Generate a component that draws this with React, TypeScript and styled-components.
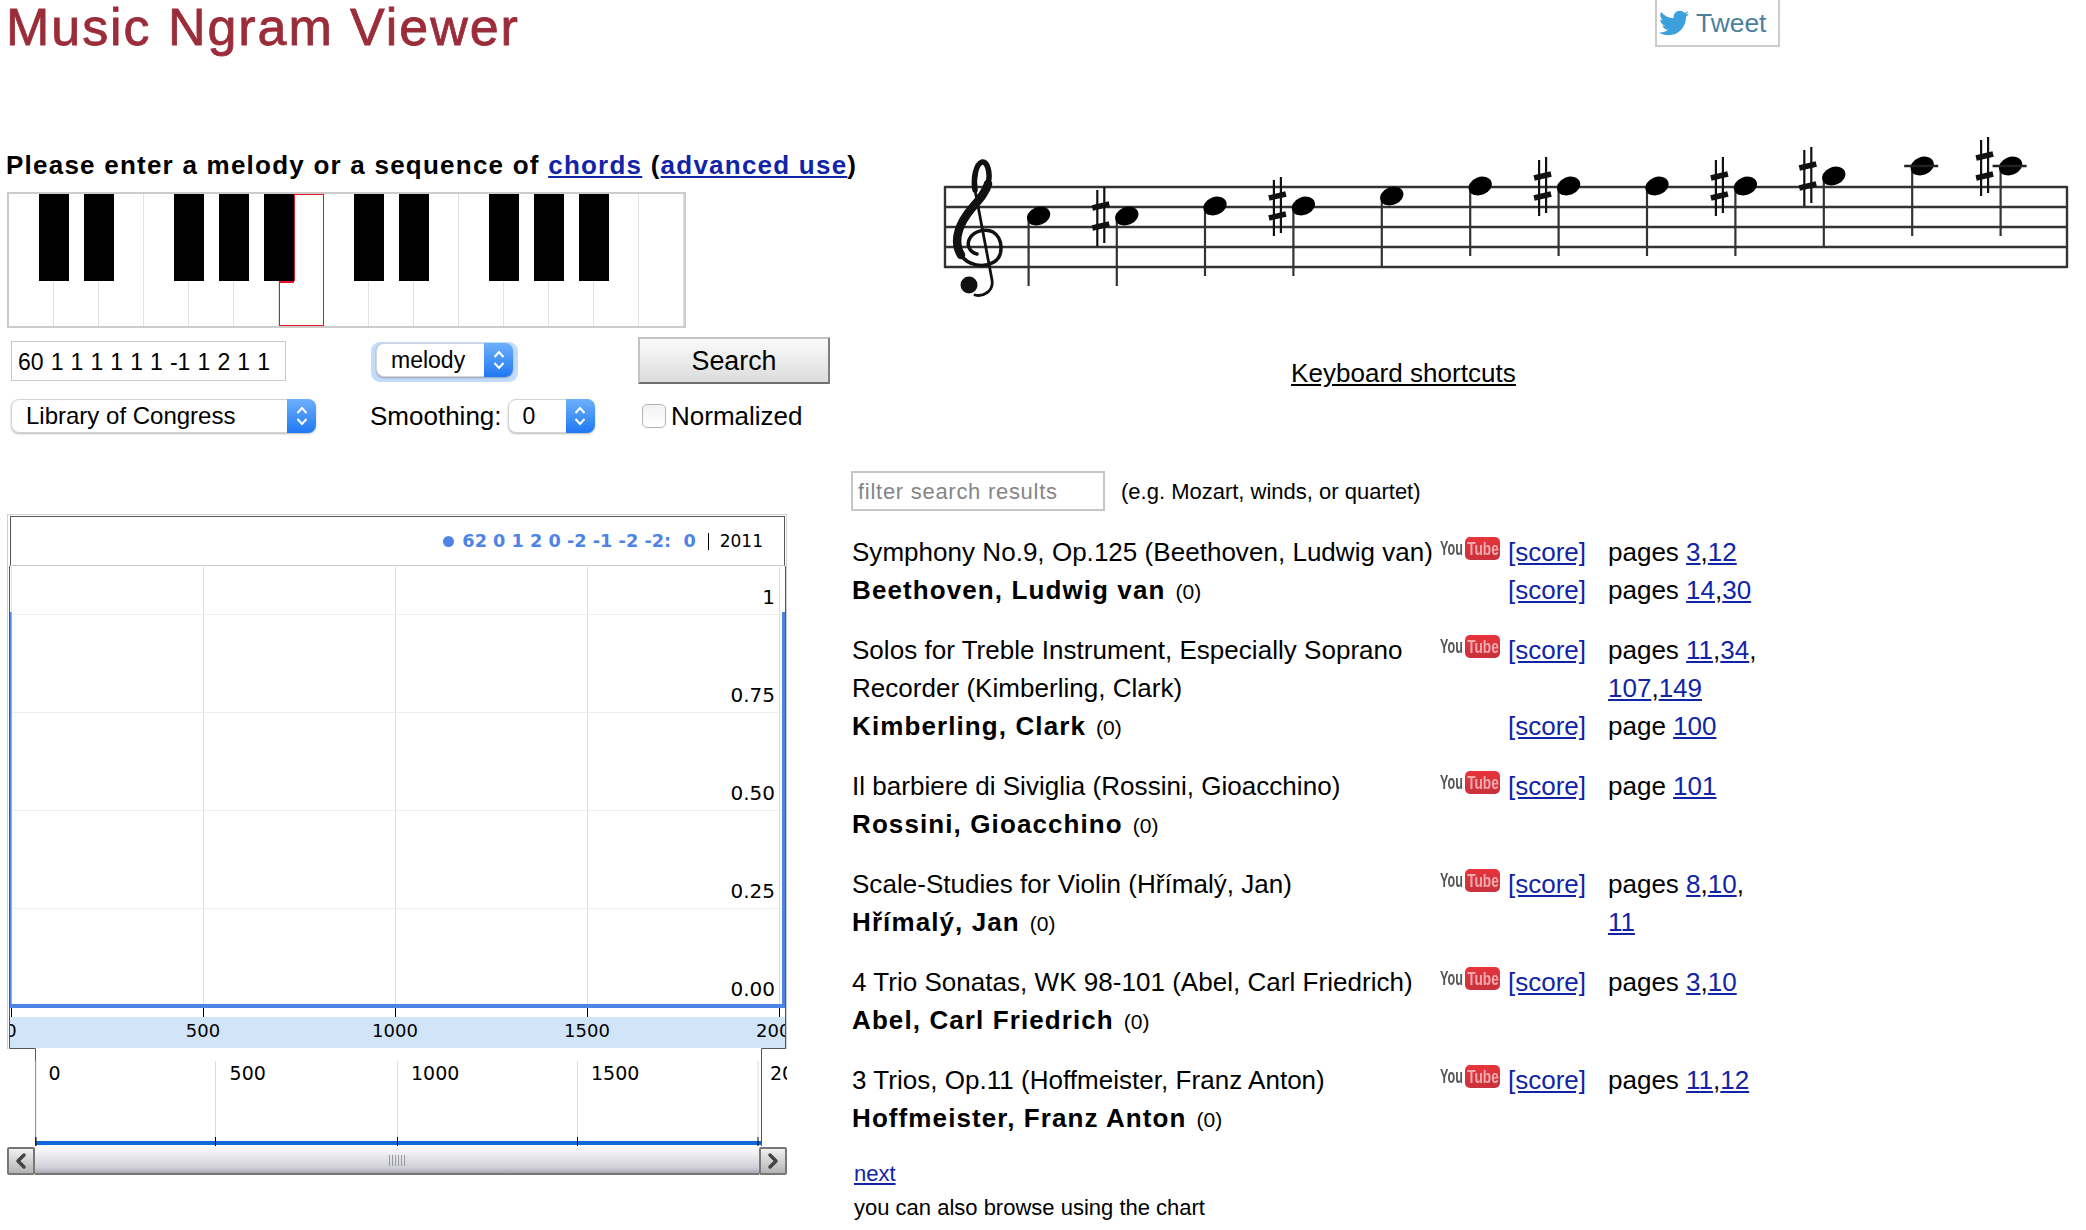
import * as React from 'react';
import styled, { createGlobalStyle } from 'styled-components';
import { FaTwitter } from 'react-icons/fa';
import { ChevronLeft, ChevronRight } from 'lucide-react';

const GlobalStyle = createGlobalStyle`
	html, body {
		margin: 0;
		padding: 0;
		background: #fff;
		color: #000;
		font-family: 'Liberation Sans', Arial, sans-serif;
	}
	* {
		box-sizing: border-box;
	}
`;

const LINK = '#1124a8';

const Header = styled.header`
	display: flex;
	justify-content: space-between;
	align-items: flex-start;
	width: 1780px;
	height: 130px;
	padding-left: 6px;
`;

const Title = styled.h1`
	margin: 1px 0 0;
	font-size: 52px;
	line-height: 52px;
	font-weight: normal;
	letter-spacing: 1.95px;
	color: #9b2d3b;
	-webkit-text-stroke: 0.8px #9b2d3b;
`;

const TweetButton = styled.a`
	display: flex;
	align-items: center;
	gap: 7px;
	width: 125px;
	height: 47px;
	padding: 1px 0 0 2px;
	border: 2px solid #ccc;
	border-top: none;
	font-size: 26.4px;
	color: #4b7f9e;
`;

const Main = styled.main`
	display: grid;
	grid-template-columns: 845px 1fr;
	grid-template-rows: 341px auto;
	padding-left: 6px;
`;

const Prompt = styled.p`
	margin: 0;
	height: 62px;
	padding-top: 18px;
	font-size: 26px;
	line-height: 34px;
	font-weight: bold;
	letter-spacing: 1.23px;
	white-space: nowrap;

	a {
		color: ${LINK};
		text-decoration: underline;
	}
`;

const Keyboard = styled.div`
	position: relative;
	display: flex;
	width: 679.5px;
	height: 136px;
	margin-left: 0.5px;
	border: 2px solid #ccc;
`;

const WhiteKey = styled.div<{ $active?: boolean }>`
	position: relative;
	flex: 0 0 45px;
	border-right: 1px solid #e2e2e2;
	&:last-child {
		border-right: none;
	}
	${(p) =>
		p.$active &&
		`
		border: 1.5px solid #e2161c;
		&::before {
			content: '';
			position: absolute;
			left: 0;
			top: 86px;
			width: 14px;
			height: 1.5px;
			background: #e2161c;
		}
	`}
`;

const BlackKey = styled.div<{ $slot: number; $active?: boolean }>`
	position: absolute;
	top: 0;
	left: ${(p) => p.$slot * 45 - 15}px;
	width: 30px;
	height: 87px;
	background: #000;
	${(p) => p.$active && 'box-shadow: 1px 0 0 #e2161c;'}
`;

const Controls = styled.div`
	display: grid;
	grid-template-columns: 360px 267px 200px;
	grid-template-rows: 47px 34px;
	row-gap: 16px;
	margin-top: 8px;
	padding-left: 5px;
	font-size: 26px;
`;

const MelodyInput = styled.div`
	align-self: end;
	width: 275px;
	height: 40px;
	margin-bottom: 2px;
	padding-left: 6px;
	border: 1px solid #c8c8c8;
	font-size: 23px;
	line-height: 40px;
	word-spacing: 0.7px;
	white-space: nowrap;
`;

const FocusRing = styled.div`
	align-self: end;
	width: 147px;
	height: 40px;
	margin-bottom: 1px;
	padding: 1px 5px 5px;
	background: #c4dcfb;
	border-radius: 9px;
`;

const Select = styled.div<{ $width: number; $pad: number; $size?: number }>`
	position: relative;
	display: flex;
	align-items: center;
	flex: none;
	width: ${(p) => p.$width}px;
	height: 34px;
	padding-left: ${(p) => p.$pad}px;
	background: #fff;
	border: 1px solid #d4d4d4;
	border-radius: 8px;
	box-shadow: 0 1px 2px rgba(0, 0, 0, 0.28);
	font-size: ${(p) => p.$size ?? 23}px;
	line-height: 34px;
	white-space: nowrap;
`;

const SelectCap = styled.span`
	position: absolute;
	top: -1px;
	right: -1px;
	bottom: -1px;
	display: flex;
	align-items: center;
	justify-content: center;
	width: 29px;
	background: linear-gradient(#6db0fb, #1f78f2);
	border-radius: 0 8px 8px 0;
`;

const SearchButton = styled.button`
	width: 192px;
	height: 47px;
	margin-top: 1px;
	padding: 2px 0 0;
	background: linear-gradient(#fbfbfb, #dcdcdc);
	border: 2px solid #c4c4c4;
	border-right-color: #808080;
	border-bottom-color: #707070;
	font-family: inherit;
	font-size: 26.8px;
	color: #000;
`;

const SmoothingField = styled.div`
	display: flex;
	align-items: center;
	gap: 6px;
	margin-left: -1px;
	font-size: 26px;
`;

const NormalizedField = styled.label`
	display: flex;
	align-items: center;
	gap: 5px;
	margin-left: 4px;
	font-size: 26px;
`;

const CheckBox = styled.span`
	width: 24px;
	height: 24px;
	background: linear-gradient(#f2f2f2, #fff);
	border: 1px solid #b4b4b4;
	border-radius: 5px;
`;

const ScorePanel = styled.section`
	padding-left: 89px;
`;

const Staff = styled.svg`
	display: block;
`;

const ShortcutsLink = styled.a`
	display: block;
	margin: 58px 0 0 351px;
	font-size: 26px;
	line-height: 30px;
	letter-spacing: 0.05px;
	color: #000;
	text-decoration: underline;
`;

const ChartPanel = styled.section`
	width: 780px;
	margin: 43px 0 0 1px;
`;

const LegendFrame = styled.div`
	padding: 1px 1px 0 1.5px;
	border: 1px solid #d0d0d0;
	border-width: 1px 1px 0;
`;

const Legend = styled.div`
	display: flex;
	align-items: center;
	justify-content: flex-end;
	height: 50px;
	padding: 0 21px 0 0;
	border: 1px solid #555;
	border-bottom-color: #c8c8c8;
	font-family: 'DejaVu Sans', sans-serif;
	white-space: pre;
`;

const LegendDot = styled.span`
	width: 11px;
	height: 11px;
	margin-right: 8px;
	background: #4d84e6;
	border-radius: 50%;
`;

const LegendSeries = styled.span`
	font-size: 17.7px;
	font-weight: bold;
	color: #4d84e6;
`;

const LegendDate = styled.span`
	margin-left: 12px;
	padding-left: 11px;
	border-left: 1px solid #000;
	font-size: 17px;
	line-height: 17px;
`;

const ChartCanvas = styled.svg`
	display: block;
`;

const AxisText = styled.text<{ $size: number }>`
	font-family: 'DejaVu Sans', sans-serif;
	font-size: ${(p) => p.$size}px;
	fill: #000;
`;

const Scrollbar = styled.div`
	display: flex;
	width: 780px;
	height: 28px;
`;

const ScrollButton = styled.div<{ $width: number }>`
	display: flex;
	align-items: center;
	justify-content: center;
	flex: 0 0 ${(p) => p.$width}px;
	background: linear-gradient(#f0f0f0, #b4b4b4);
	border: 2px solid #777;
	border-radius: 2px;
	color: #444;
`;

const ScrollTrack = styled.div`
	position: relative;
	flex: 1;
	background: linear-gradient(#fdfdfd 0%, #e6e6ea 40%, #cfcfd8 80%, #a9a9b4 100%);
	border-bottom: 2px solid #777;
`;

const ScrollGrip = styled.span`
	position: absolute;
	left: 50%;
	top: 8px;
	width: 16px;
	height: 11px;
	margin-left: -8px;
	background: repeating-linear-gradient(90deg, #9a9aa4 0 1px, transparent 1px 3px);
`;

const ResultsPanel = styled.section``;

const FilterRow = styled.div`
	display: flex;
	align-items: flex-start;
	gap: 16px;
	height: 40px;
	font-size: 22px;
	line-height: 40px;
`;

const FilterHint = styled.span`
	padding-top: 1px;
`;

const FilterInput = styled.div`
	width: 254px;
	height: 40px;
	padding-left: 5px;
	border: 2px solid #c6c6c6;
	line-height: 38px;
	letter-spacing: 0.72px;
	color: #858585;
	white-space: nowrap;
`;

const ResultsList = styled.div`
	display: flex;
	flex-direction: column;
	gap: 22px;
	margin-top: 22px;
	padding-left: 1px;
`;

const ResultGroup = styled.div`
	display: grid;
	grid-template-columns: 588px 68px 100px 155px;
	font-size: 26px;
	line-height: 38px;

	a {
		color: ${LINK};
		text-decoration: underline;
	}
`;

const WorkTitle = styled.div`
	grid-column: 1;
	letter-spacing: 0.03px;
`;

const Composer = styled.div`
	grid-column: 1;
	font-weight: bold;
	letter-spacing: 1.1px;
`;

const ComposerCount = styled.span`
	margin-left: 10px;
	font-size: 21px;
	line-height: 1;
	font-weight: normal;
	letter-spacing: 0;
`;

const ScoreCell = styled.div`
	grid-column: 3;
`;

const PagesCell = styled.div<{ $span?: boolean }>`
	grid-column: 4;
	${(p) => p.$span && 'grid-row: span 2;'}
`;

const YouTubeBadge = styled.span`
	grid-column: 2;
	display: flex;
	align-items: center;
	align-self: start;
	width: 60px;
	height: 23px;
	margin-top: 4px;
	line-height: 1;
	font-weight: bold;
	filter: blur(0.5px);
`;

const YouText = styled.span`
	display: block;
	width: 25px;
	margin-top: -3px;
	font-size: 21px;
	color: #555;
	transform: scaleX(0.6);
	transform-origin: 0 50%;
`;

const TubeBox = styled.span`
	display: flex;
	align-items: center;
	justify-content: center;
	width: 35px;
	height: 23px;
	background: linear-gradient(#e8343c, #c8323c);
	border-radius: 5px;
	overflow: hidden;
	font-size: 19px;
`;

const TubeText = styled.span`
	color: #eeaaae;
	transform: scaleX(0.72);
`;

const PagerBlock = styled.div`
	margin: 20px 0 0 3px;
	font-size: 22px;
	line-height: 34px;

	a {
		display: block;
		width: fit-content;
		color: ${LINK};
		text-decoration: underline;
		font-size: 22px;
	}
`;

const BLACK_SLOTS = [1, 2, 4, 5, 6, 8, 9, 11, 12, 13];

const NOTES = [
	{ stem: 1028.6, y: 216 },
	{ stem: 1116.8, y: 216, sharp: true },
	{ stem: 1205, y: 206 },
	{ stem: 1293.4, y: 206, sharp: true },
	{ stem: 1381.8, y: 196 },
	{ stem: 1470.2, y: 186 },
	{ stem: 1558.6, y: 186, sharp: true },
	{ stem: 1647, y: 186 },
	{ stem: 1735.4, y: 186, sharp: true },
	{ stem: 1823.8, y: 176, sharp: true },
	{ stem: 1912.2, y: 166, ledger: true },
	{ stem: 2000.6, y: 166, sharp: true, ledger: true },
];

const RESULTS = [
	{
		title: 'Symphony No.9, Op.125 (Beethoven, Ludwig van)',
		composer: 'Beethoven, Ludwig van',
		pages: [3, 12],
		composerPages: [14, 30],
	},
	{
		title: 'Solos for Treble Instrument, Especially Soprano Recorder (Kimberling, Clark)',
		composer: 'Kimberling, Clark',
		pages: [11, 34, 107, 149],
		composerPages: [100],
	},
	{
		title: 'Il barbiere di Siviglia (Rossini, Gioacchino)',
		composer: 'Rossini, Gioacchino',
		pages: [101],
	},
	{
		title: 'Scale-Studies for Violin (Hřímalý, Jan)',
		composer: 'Hřímalý, Jan',
		pages: [8, 10, 11],
	},
	{
		title: '4 Trio Sonatas, WK 98-101 (Abel, Carl Friedrich)',
		composer: 'Abel, Carl Friedrich',
		pages: [3, 10],
	},
	{
		title: '3 Trios, Op.11 (Hoffmeister, Franz Anton)',
		composer: 'Hoffmeister, Franz Anton',
		pages: [11, 12],
	},
];

const PLOT_X = [11, 203, 395, 587, 779];
const NAV_X = [36, 215.5, 397.5, 577.5, 758];
const NAV_LABELS = [48.5, 229.6, 411, 591, 770];
const YEARS = ['0', '500', '1000', '1500', '2000'];

const SelectArrows: React.FC = () => (
	<svg width='14' height='22' viewBox='0 0 14 22' fill='none' stroke='#fff' strokeWidth='2'>
		<path d='M2.5 8 L7 3 L11.5 8' />
		<path d='M2.5 14 L7 19 L11.5 14' />
	</svg>
);

const PageLinks: React.FC<{ pages: number[] }> = ({ pages }) => (
	<>
		{pages.length > 1 ? 'pages ' : 'page '}
		{pages.map((page, i) => (
			<React.Fragment key={page}>
				{i > 0 && (
					<>
						,<wbr />
					</>
				)}
				<a href='#'>{page}</a>
			</React.Fragment>
		))}
	</>
);

const TrebleClef: React.FC = () => (
	<g fill='none' stroke='#111' strokeLinecap='round'>
		<path
			strokeWidth='3.5'
			d='M977 254 C969 252 966 244 970 238 C974 231 986 228 993 232 C1003 238 1004 256 994 262 C984 268 968 266 961 255'
		/>
		<path strokeWidth='8.5' d='M961 255 C952 240 960 222 972 208 C980 199 986 192 988 184' />
		<path strokeWidth='5.5' d='M988 184 C991 172 987 161 982 162 C976 164 973 178 975 190' />
		<path strokeWidth='2.8' d='M975 190 L992 280 C994 292 982 297 975 295' />
		<circle cx='969' cy='285' r='8.5' fill='#111' stroke='none' />
	</g>
);

const ScoreStaff: React.FC = () => (
	<Staff width='1130' height='170' viewBox='940 130 1130 170'>
		<g stroke='#333' strokeWidth='2.4'>
			{[187, 207, 227, 247, 267].map((y) => (
				<line key={y} x1='944.5' x2='2067' y1={y} y2={y} />
			))}
			<line x1='945' x2='945' y1='186' y2='268' />
			<line x1='2067' x2='2067' y1='186' y2='268' />
		</g>
		<TrebleClef />
		{NOTES.map((note) => {
			const sx = note.stem - 16;
			return (
				<g key={note.stem}>
					<line x1={note.stem} x2={note.stem} y1={note.y} y2={note.y + 70} stroke='#333' strokeWidth='2.2' />
					<ellipse
						cx={note.stem + 10}
						cy={note.y}
						rx='12'
						ry='9'
						fill='#000'
						transform={`rotate(-22 ${note.stem + 10} ${note.y})`}
					/>
					{note.ledger && (
						<line x1={note.stem - 8} x2={note.stem + 26} y1={note.y} y2={note.y} stroke='#222' strokeWidth='2.6' />
					)}
					{note.sharp && (
						<g stroke='#111'>
							<line x1={sx - 3.5} x2={sx - 3.5} y1={note.y - 26} y2={note.y + 30} strokeWidth='2.2' />
							<line x1={sx + 3.5} x2={sx + 3.5} y1={note.y - 29} y2={note.y + 27} strokeWidth='2.2' />
							<line x1={sx - 8.5} x2={sx + 8.5} y1={note.y - 8} y2={note.y - 12} strokeWidth='5.5' />
							<line x1={sx - 8.5} x2={sx + 8.5} y1={note.y + 12} y2={note.y + 8} strokeWidth='5.5' />
						</g>
					)}
				</g>
			);
		})}
	</Staff>
);

const Chart: React.FC = () => (
	<ChartCanvas width='780' height='581' viewBox='7 565 780 581'>
		<defs>
			<clipPath id='band-clip'>
				<rect x='9' y='1016' width='776' height='31' />
			</clipPath>
		</defs>
		<g stroke='#d0d0d0'>
			<line x1='7.5' x2='7.5' y1='565' y2='1048' />
			<line x1='786.5' x2='786.5' y1='565' y2='1048' />
		</g>
		<g stroke='#dcdcdc'>
			{PLOT_X.map((x) => (
				<line key={x} x1={x + 0.5} x2={x + 0.5} y1='566' y2='1003' />
			))}
		</g>
		<g stroke='#eeeeee'>
			{[613, 711, 809, 907].map((y) => (
				<line key={y} x1='11' x2='782' y1={y + 0.5} y2={y + 0.5} />
			))}
		</g>
		{['1', '0.75', '0.50', '0.25', '0.00'].map((label, i) => (
			<AxisText key={label} $size={20} x='775' y={603 + i * 98} textAnchor='end'>
				{label}
			</AxisText>
		))}
		<rect x='9' y='611' width='2.5' height='396' fill='#4d84e6' />
		<rect x='782' y='611' width='3.5' height='396' fill='#4d84e6' />
		<rect x='9' y='1003' width='776' height='4' fill='#4d84e6' />
		<g stroke='#000'>
			{PLOT_X.map((x) => (
				<line key={x} x1={x + 0.5} x2={x + 0.5} y1='1007' y2='1016' />
			))}
		</g>
		<rect x='9' y='1016' width='776' height='31' fill='#d2e4f8' />
		<g clipPath='url(#band-clip)'>
			{YEARS.map((label, i) => (
				<AxisText key={label} $size={18} x={PLOT_X[i]} y='1036' textAnchor='middle'>
					{label}
				</AxisText>
			))}
		</g>
		<g fill='none' stroke='#555'>
			<path d='M9.5 565 V1047.5 H35.5 V1145' />
			<path d='M785.5 565 V1047.5 H761.5 V1145' />
		</g>
		<g stroke='#dcdcdc'>
			{NAV_X.map((x) => (
				<line key={x} x1={x} x2={x} y1='1060' y2='1136' />
			))}
		</g>
		{YEARS.map((label, i) => (
			<AxisText key={label} $size={19} x={NAV_LABELS[i]} y='1079'>
				{label}
			</AxisText>
		))}
		<rect x='36' y='1140' width='725' height='4' fill='#1168d8' />
		<g stroke='#000'>
			{NAV_X.map((x) => (
				<line key={x} x1={x} x2={x} y1='1136' y2='1145' />
			))}
		</g>
	</ChartCanvas>
);

const App: React.FC = () => {
	return (
		<>
			<GlobalStyle />
			<Header>
				<Title>Music Ngram Viewer</Title>
				<TweetButton>
					<FaTwitter size={30} color='#3ba0dc' />
					Tweet
				</TweetButton>
			</Header>
			<Main>
				<section>
					<Prompt>
						Please enter a melody or a sequence of <a href='#'>chords</a> (<a href='#'>advanced use</a>)
					</Prompt>
					<Keyboard>
						{Array.from({ length: 15 }, (_, i) => (
							<WhiteKey key={i} $active={i === 6} />
						))}
						{BLACK_SLOTS.map((slot) => (
							<BlackKey key={slot} $slot={slot} $active={slot === 6} />
						))}
					</Keyboard>
					<Controls>
						<MelodyInput>60 1 1 1 1 1 1 -1 1 2 1 1</MelodyInput>
						<FocusRing>
							<Select $width={137} $pad={14}>
								melody
								<SelectCap>
									<SelectArrows />
								</SelectCap>
							</Select>
						</FocusRing>
						<SearchButton>Search</SearchButton>
						<Select $width={305} $pad={14} $size={24}>
							Library of Congress
							<SelectCap>
								<SelectArrows />
							</SelectCap>
						</Select>
						<SmoothingField>
							Smoothing:
							<Select $width={87} $pad={14}>
								0
								<SelectCap>
									<SelectArrows />
								</SelectCap>
							</Select>
						</SmoothingField>
						<NormalizedField>
							<CheckBox />
							Normalized
						</NormalizedField>
					</Controls>
				</section>
				<ScorePanel>
					<ScoreStaff />
					<ShortcutsLink href='#'>Keyboard shortcuts</ShortcutsLink>
				</ScorePanel>
				<ChartPanel>
					<LegendFrame>
						<Legend>
							<LegendDot />
							<LegendSeries>{'62 0 1 2 0 -2 -1 -2 -2:  0'}</LegendSeries>
							<LegendDate>2011</LegendDate>
						</Legend>
					</LegendFrame>
					<Chart />
					<Scrollbar>
						<ScrollButton $width={28}>
							<ChevronLeft size={24} strokeWidth={3.5} />
						</ScrollButton>
						<ScrollTrack>
							<ScrollGrip />
						</ScrollTrack>
						<ScrollButton $width={26}>
							<ChevronRight size={24} strokeWidth={3.5} />
						</ScrollButton>
					</Scrollbar>
				</ChartPanel>
				<ResultsPanel>
					<FilterRow>
						<FilterInput>filter search results</FilterInput>
						<FilterHint>(e.g. Mozart, winds, or quartet)</FilterHint>
					</FilterRow>
					<ResultsList>
						{RESULTS.map((result) => (
							<ResultGroup key={result.title}>
								<WorkTitle>{result.title}</WorkTitle>
								<YouTubeBadge>
									<YouText>You</YouText>
									<TubeBox>
										<TubeText>Tube</TubeText>
									</TubeBox>
								</YouTubeBadge>
								<ScoreCell>
									<a href='#'>[score]</a>
								</ScoreCell>
								<PagesCell $span={!result.composerPages}>
									<PageLinks pages={result.pages} />
								</PagesCell>
								<Composer>
									{result.composer}
									<ComposerCount>(0)</ComposerCount>
								</Composer>
								{result.composerPages && (
									<>
										<ScoreCell>
											<a href='#'>[score]</a>
										</ScoreCell>
										<PagesCell>
											<PageLinks pages={result.composerPages} />
										</PagesCell>
									</>
								)}
							</ResultGroup>
						))}
					</ResultsList>
					<PagerBlock>
						<a href='#'>next</a>
						you can also browse using the chart
					</PagerBlock>
				</ResultsPanel>
			</Main>
		</>
	);
};

export default App;
